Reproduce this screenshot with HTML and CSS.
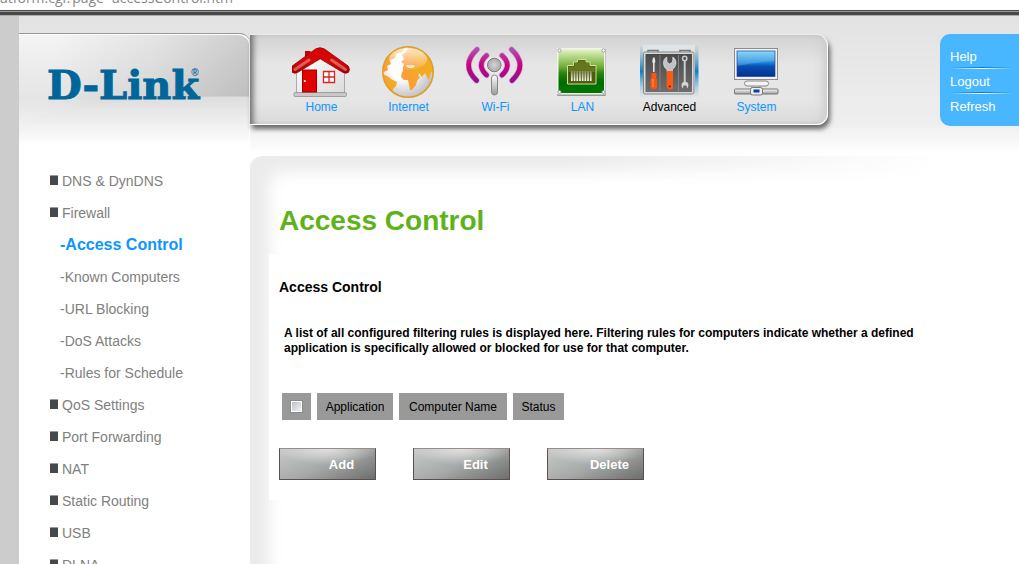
FILE: index.html
```html
<!DOCTYPE html>
<html lang="en">
<head>
    <meta charset="UTF-8">
    <meta name="viewport" content="width=device-width, initial-scale=1.0">
    <title>D-Link - Access Control</title>
    <link rel="stylesheet" href="styles.css">
</head>
<body>
    <div class="address-bar"><span>atform.cgi?page=accessControl.htm</span></div>

    <div class="page">
        <header class="header">
            <div class="logo">
                <span class="logo-name">D-Link</span><span class="logo-mark">®</span>
            </div>

            <nav class="main-nav">
                <a href="#home">
                    <svg width="60" height="56" viewBox="1 0 60 56">
                        <defs>
                            <linearGradient id="roof" x1="0" y1="0" x2="0" y2="1">
                                <stop offset="0" stop-color="#e00000"/>
                                <stop offset=".55" stop-color="#d00808"/>
                                <stop offset="1" stop-color="#a80000"/>
                            </linearGradient>
                            <linearGradient id="wall" x1="0" y1="0" x2="1" y2="1">
                                <stop offset="0" stop-color="#fff"/>
                                <stop offset="1" stop-color="#dcdcdc"/>
                            </linearGradient>
                        </defs>
                        <rect x="14" y="7" width="5.5" height="11" fill="#c40000"/>
                        <path d="M5.5 24 L29 9 L53.5 24 V49 H5.5Z" fill="url(#wall)" stroke="#aaa"/>
                        <rect x="3" y="48.5" width="52.5" height="4" rx="1" fill="#c8c8c8" stroke="#929292" stroke-width=".8"/>
                        <rect x="11.5" y="26" width="14" height="22" fill="#e30000" stroke="#a00000"/>
                        <circle cx="13.8" cy="37" r="1.1" fill="#fff"/>
                        <path d="M32.5 27.5H43.5V38.5H32.5Z M38 27.5V38.5 M32.5 33H43.5" fill="#fff" stroke="#d22" stroke-width="1.3"/>
                        <path d="M1.2 22 L24.5 5 Q29 2.4 33.5 5 L57.2 22 Q59.5 25.500 57.500 28.3 Q55 30 52 28.5 L29.2 14.8 L6.500 28.500 Q3.5 30 1.200 28.300 Q-.8 25.500 1.2 22Z" fill="url(#roof)" stroke="#940000" stroke-width=".8"/>
                        <path d="M4 25.5 L18 16 M54.500 25.5 L40.500 16" stroke="#f5a0a0" stroke-width="3" stroke-linecap="round" opacity=".55"/>
                    </svg>
                    <span>Home</span>
                </a>
                <a href="#internet">
                    <svg width="60" height="56" viewBox="0 0 60 56">
                        <defs>
                            <linearGradient id="land" x1="0" y1="0" x2="1" y2="0">
                                <stop offset="0" stop-color="#ff9a3c"/>
                                <stop offset="1" stop-color="#f0b01c"/>
                            </linearGradient>
                            <linearGradient id="gloss" x1="0" y1="0" x2="0" y2="1">
                                <stop offset="0" stop-color="#fff" stop-opacity=".75"/>
                                <stop offset="1" stop-color="#fff" stop-opacity=".05"/>
                            </linearGradient>
                            <radialGradient id="sea" cx=".4" cy=".4" r=".65">
                                <stop offset=".4" stop-color="#fdfdfd"/>
                                <stop offset="1" stop-color="#bdbdc4"/>
                            </radialGradient>
                            <clipPath id="globe"><circle cx="29" cy="28" r="25"/></clipPath>
                        </defs>
                        <circle cx="29" cy="28" r="25" fill="url(#sea)"/>
                        <g clip-path="url(#globe)" fill="url(#land)">
                            <path d="M0 0H26L24 7 17 10 16 14 11 16 12 20 8 22 9 26 5 28 0 24Z"/>
                            <path d="M4 30 L10 33 12 35 18 38 17 42 14 45 13 49 15 54 4 50 0 36Z"/>
                            <path d="M30 2 L27 8 23 11 25 15 22 18 25 20 24 24 28 23 31 21 34 23 38 22 40 25 27 26 23 28 22 33 25 36 29 36 30 41 31 46 33 46 37 41 38 37 41 33 38 30 40 29 43 33 46 29 48 33 50 36 52 28 56 29 56 0Z"/>
                            <path d="M24 22 H40 V31 H24Z"/>
                            <path d="M46 49 L52 41 54 45 48 52Z"/>
                        </g>
                        <path d="M27 22 L29 21 31 23 33 21 36 22 34 24 30 24Z" fill="#fff4dc"/>
                        <ellipse cx="29" cy="15" rx="19" ry="11" fill="url(#gloss)"/>
                        <circle cx="29" cy="28" r="25.2" fill="none" stroke="#df9e25" stroke-width="1.6"/>
                    </svg>
                    <span>Internet</span>
                </a>
                <a href="#wifi">
                    <svg width="60" height="56" viewBox="1 0 60 56">
                        <defs>
                            <linearGradient id="wave" x1="0" y1="0" x2="0" y2="1">
                                <stop offset="0" stop-color="#b04cb0"/>
                                <stop offset=".5" stop-color="#c9047e"/>
                                <stop offset="1" stop-color="#95108f"/>
                            </linearGradient>
                            <radialGradient id="ball">
                                <stop offset="0" stop-color="#d4d4d4"/>
                                <stop offset="1" stop-color="#aaa"/>
                            </radialGradient>
                            <linearGradient id="stick" x1="0" y1="0" x2="0" y2="1">
                                <stop offset="0" stop-color="#fff"/>
                                <stop offset="1" stop-color="#999"/>
                            </linearGradient>
                        </defs>
                        <g fill="none" stroke-linecap="round">
                            <path d="M12 5.5 Q-4.5 21 11.5 36.5 M46.6 5.5 Q63.1 21 47.1 36.5 M21.5 11.5 Q11 21 21.5 31 M37.1 11.5 Q47.6 21 37.1 31" stroke="#d9b4d9" stroke-width="6.4"/>
                            <path d="M12 5.5 Q-4.5 21 11.5 36.5 M46.6 5.5 Q63.1 21 47.1 36.5 M21.5 11.5 Q11 21 21.5 31 M37.1 11.5 Q47.6 21 37.1 31" stroke="url(#wave)" stroke-width="4.8"/>
                        </g>
                        <circle cx="29.3" cy="21" r="8" fill="#f4f4f4"/>
                        <circle cx="29.3" cy="21" r="6.8" fill="url(#ball)" stroke="#777"/>
                        <rect x="26.5" y="31" width="6" height="20" rx="3" fill="url(#stick)" stroke="#888"/>
                    </svg>
                    <span>Wi-Fi</span>
                </a>
                <a href="#lan">
                    <svg width="60" height="56" viewBox="1 0 60 56">
                        <defs>
                            <linearGradient id="plate" x1="0" y1="0" x2="0" y2="1">
                                <stop offset="0" stop-color="#e4f2c4"/>
                                <stop offset=".4" stop-color="#6fae34"/>
                                <stop offset=".55" stop-color="#2a8210"/>
                                <stop offset=".75" stop-color="#006c00"/>
                                <stop offset="1" stop-color="#007800"/>
                            </linearGradient>
                            <linearGradient id="pins" x1="0" y1="0" x2="0" y2="1">
                                <stop offset="0" stop-color="#8a8a60"/>
                                <stop offset="1" stop-color="#fff"/>
                            </linearGradient>
                        </defs>
                        <rect x="5" y="4.5" width="49" height="47.5" rx="1.5" fill="#999"/>
                        <rect x="5" y="4" width="48.5" height="46.5" rx="1.5" fill="#f0f4e8"/>
                        <rect x="6.5" y="5.5" width="45.5" height="43.5" fill="url(#plate)"/>
                        <path d="M15.5 40V21.5H21.5V18H25.5V15.5H34V18H38V21.5H44V40Z" fill="#4f5d08" stroke="#cfe0a0"/>
                        <path d="M16.5 28V22.5H22.5V19H26.5V16.5H33V19H37V22.5H43V28Z" fill="#66761a"/>
                        <path fill="url(#pins)" d="M19 27h1.7v10h-1.7Z M21.7 27h1.7v10h-1.7Z M24.4 27h1.7v10h-1.7Z M27.1 27h1.7v10h-1.7Z M29.8 27h1.7v10h-1.7Z M32.5 27h1.7v10h-1.7Z M35.2 27h1.7v10h-1.7Z M37.9 27h1.7v10h-1.7Z"/>
                        <g fill="#fff" stroke="#889" stroke-width=".8">
                            <circle cx="7.5" cy="6.5" r="1.6"/><circle cx="51.5" cy="6.5" r="1.6"/>
                            <circle cx="7.5" cy="48" r="1.6"/><circle cx="51.5" cy="48" r="1.6"/>
                        </g>
                    </svg>
                    <span>LAN</span>
                </a>
                <a href="#advanced" class="current">
                    <svg width="60" height="56" viewBox="1 0 60 56">
                        <defs>
                            <linearGradient id="glow" x1="0" y1="0" x2="0" y2="1">
                                <stop offset="0" stop-color="#2b8fc8" stop-opacity="0"/>
                                <stop offset=".5" stop-color="#0d7fc0"/>
                                <stop offset="1" stop-color="#7cc4ec" stop-opacity="0"/>
                            </linearGradient>
                            <linearGradient id="case" x1="0" y1="0" x2="0" y2="1">
                                <stop offset="0" stop-color="#4a4a4a"/>
                                <stop offset="1" stop-color="#6e6e6e"/>
                            </linearGradient>
                        </defs>
                        <rect x="1" y="1" width="58.5" height="53" fill="url(#glow)"/>
                        <rect x="4" y="1" width="52" height="52" fill="#dfe4e8"/>
                        <path d="M9 8V6.5H19V8M41 8V6.5H51V8" fill="none" stroke="#777" stroke-width="1.6"/>
                        <rect x="4.5" y="8" width="50.5" height="42" rx="1.5" fill="#d8d8d8" stroke="#858585"/>
                        <rect x="6.5" y="10" width="46.5" height="38" fill="url(#case)"/>
                        <path d="M21 11V47M39.5 11V47" stroke="#888" stroke-width=".9"/>
                        <path d="M14 13.5h1.6l.8 4-.8 2V28H14V19.5l-.8-2Z" fill="#e4e4e4"/>
                        <path d="M12 29.5Q14.8 28 17.8 29.5L17 33 18 36V43Q18 45 16 45H13.7Q11.5 45 11.5 43V36L12.7 33Z" fill="#ff5310"/>
                        <path d="M14 35V43" stroke="#ffa27a"/>
                        <path d="M27.8 13 L28 18 30.7 20 33.5 18 33.8 13 Q37.5 15 37 20 Q36 24 33.5 25.5V28H28V25.5Q25 24 24.5 20 Q24 15 27.8 13Z" fill="#bfc4c8" stroke="#e5e5e5" stroke-width=".6"/>
                        <path d="M27.7 27H34V43.5Q34 45.5 31 45.5T27.7 43.5Z" fill="#ff5a14"/>
                        <circle cx="30.8" cy="42.5" r="1.1" fill="#5a2010"/>
                        <circle cx="45.7" cy="14.5" r="2.2" fill="none" stroke="#ccc" stroke-width="1.5"/>
                        <path d="M45.7 17V38" stroke="#ccc" stroke-width="2"/>
                        <path d="M43.500 44.5Q41.500 40.500 43.500 38.500Q46 37 48.500 38.500Q50.300 41 48.500 44.500L47.300 41.500H44.600Z" fill="#d6d6d6"/>
                    </svg>
                    <span>Advanced</span>
                </a>
                <a href="#system">
                    <svg width="60" height="56" viewBox="1 0 60 56">
                        <defs>
                            <linearGradient id="screen" x1="0" y1="0" x2="0" y2="1">
                                <stop offset="0" stop-color="#6fd0f8"/>
                                <stop offset=".45" stop-color="#1c88dc"/>
                                <stop offset=".6" stop-color="#0850b0"/>
                                <stop offset="1" stop-color="#042f92"/>
                            </linearGradient>
                            <linearGradient id="metal" x1="0" y1="0" x2="0" y2="1">
                                <stop offset="0" stop-color="#fff"/>
                                <stop offset="1" stop-color="#999"/>
                            </linearGradient>
                        </defs>
                        <rect x="8.5" y="4.5" width="43" height="31" fill="#f1f1f1" stroke="#8c8c8c"/>
                        <rect x="11" y="7" width="38" height="25.5" fill="url(#screen)" stroke="#20429a" stroke-width=".7"/>
                        <path d="M11.5 7.5H48.5V17Q30 18 11.5 22Z" fill="#fff" opacity=".18"/>
                        <path d="M26 41H34V46H26Z" fill="#ddd" stroke="#888" stroke-width=".8"/>
                        <rect x="18.5" y="37" width="24" height="5" rx="2.5" fill="#f4f4f4" stroke="#888"/>
                        <rect x="8.5" y="45" width="43.5" height="5" rx="1" fill="url(#metal)" stroke="#777"/>
                        <rect x="24.5" y="43.5" width="12" height="7.5" rx="2" fill="#eee" stroke="#777"/>
                        <rect x="27.5" y="45.5" width="6" height="3" fill="#0b3eb4"/>
                    </svg>
                    <span>System</span>
                </a>
            </nav>

            <ul class="tools">
                <li><a href="#help">Help</a></li>
                <li><a href="#logout">Logout</a></li>
                <li><a href="#refresh">Refresh</a></li>
            </ul>
        </header>

        <div class="columns">
            <ul class="side-menu">
                <li><a href="#dns">DNS &amp; DynDNS</a></li>
                <li><a href="#firewall">Firewall</a></li>
                <li class="sub active"><a href="#access">-Access Control</a></li>
                <li class="sub"><a href="#known">-Known Computers</a></li>
                <li class="sub"><a href="#url">-URL Blocking</a></li>
                <li class="sub"><a href="#dos">-DoS Attacks</a></li>
                <li class="sub"><a href="#rules">-Rules for Schedule</a></li>
                <li><a href="#qos">QoS Settings</a></li>
                <li><a href="#port">Port Forwarding</a></li>
                <li><a href="#nat">NAT</a></li>
                <li><a href="#routing">Static Routing</a></li>
                <li><a href="#usb">USB</a></li>
                <li><a href="#dlna">DLNA</a></li>
            </ul>

            <main class="content">
                <div class="content-head">
                    <h1>Access Control</h1>
                </div>
                <div class="content-body">
                    <h2>Access Control</h2>
                    <p>A list of all configured filtering rules is displayed here. Filtering rules for computers indicate whether a defined application is specifically allowed or blocked for use for that computer.</p>
                    <table class="rules">
                        <thead>
                            <tr>
                                <th><input type="checkbox" aria-label="Select all"></th>
                                <th class="col-app">Application</th>
                                <th class="col-name">Computer Name</th>
                                <th class="col-status">Status</th>
                            </tr>
                        </thead>
                    </table>
                    <div class="buttons">
                        <button type="button">Add</button>
                        <button type="button">Edit</button>
                        <button type="button">Delete</button>
                    </div>
                </div>
            </main>
        </div>
    </div>
</body>
</html>
```
FILE: styles.css
```css
* {
    box-sizing: border-box;
}
body {
    margin: 0;
    height: 100vh;
    overflow: hidden;
    display: flex;
    flex-direction: column;
    font-family: "Liberation Sans", Arial, sans-serif;
    font-size: 12px;
    background: #fff;
}
a {
    color: inherit;
    text-decoration: none;
}
ul {
    list-style: none;
    margin: 0;
    padding: 0;
}

/* browser strip on top */
.address-bar {
    flex: none;
    display: flex;
    align-items: flex-end;
    height: 16px;
    overflow: hidden;
    padding-bottom: 6px;
    background: linear-gradient(#fff 10px, #4a4a4a 10px, #4a4a4a 11px, #999 11px, #999 12px, #484848 12px, #484848 15px, #aaa 15px);
    color: #888;
    font-family: "Open Sans", sans-serif;
    font-size: 14px;
    line-height: 24px;
}

.page {
    flex: 1;
    min-height: 0;
    border-left: 19px solid #ccc;
    background: linear-gradient(#e2e2e2, #efefef 108px, #fff 138px);
}

/* header */
.header {
    display: flex;
    align-items: flex-start;
    height: 140px;
    padding-top: 17px;
}
.logo {
    flex: none;
    display: flex;
    align-items: flex-start;
    width: 231px;
    height: 123px;
    padding: 27px 0 0 28px;
    border-top: 1px solid #999;
    border-top-right-radius: 10px;
    background:
        linear-gradient(rgba(255, 255, 255, 0) 64px, #fff 112px),
        radial-gradient(ellipse 240px 50px at 210px 112px, #dedede 98%, rgba(222, 222, 222, 0)),
        linear-gradient(rgba(0, 0, 0, 0), rgba(0, 0, 0, .08) 80px),
        linear-gradient(100deg, #f4f4f4 15%, #e4e4e4 55%, #c8c8c8);
    box-shadow: inset -2px 2px 0 -1px #fff;
    color: #006699;
}
.logo-name {
    font-family: "DejaVu Serif", serif;
    font-weight: bold;
    font-size: 40px;
    line-height: 48px;
    -webkit-text-stroke: 1px #006699;
}
.logo-mark {
    margin-left: -8px;
    font-size: 10px;
    line-height: 24px;
    font-weight: bold;
}
.main-nav {
    flex: none;
    display: flex;
    width: 578px;
    height: 90px;
    margin-top: 2px;
    padding: 9px 0 0 28px;
    border: solid #fff;
    border-width: 0 1px 1px 0;
    border-radius: 0 11px 11px 0;
    background: linear-gradient(#d2d2d2, #e6e6e6 30px, #e6e6e6 65px, #d9d9d9);
    box-shadow:
        inset 7px 0 6px -4px #666,
        inset -10px 0 8px -6px #ccc,
        0 -1px 0 #eee,
        2px 4px 5px #666;
    color: #0c96ff;
}
.main-nav a {
    width: 87px;
    display: flex;
    flex-direction: column;
    align-items: center;
    line-height: 15px;
}
.main-nav .current {
    color: #000;
}
.tools {
    width: 79px;
    height: 92px;
    margin: 1px 0 0 auto;
    padding: 10px 6px 0 10px;
    border-radius: 10px 0 0 10px;
    background: #49b7ff;
    color: #fff;
    font-size: 13px;
}
.tools li {
    line-height: 25px;
    background:
        linear-gradient(90deg, #49b7ff, #0878cc 50%, #49b7ff) left bottom 1px / 100% 1px no-repeat,
        linear-gradient(90deg, #49b7ff, #fff 50%, #49b7ff) left bottom / 100% 1px no-repeat;
}
.tools li:last-child {
    background: none;
}

/* columns below the header */
.columns {
    display: flex;
}
.side-menu {
    flex: none;
    width: 231px;
    padding: 9px 0 0 31px;
    color: #808080;
    font-size: 14px;
    line-height: 32px;
}
.side-menu li {
    display: flex;
    height: 32px;
}
.side-menu li::before {
    content: "";
    width: 8px;
    height: 9px;
    margin: 10px 4px 0 0;
    border-top: 1px solid #999;
    background: #484848;
}
.side-menu .sub {
    padding-left: 10px;
}
.side-menu .sub::before {
    display: none;
}
.side-menu .active {
    color: #0c96ff;
    font-size: 16px;
    font-weight: bold;
}

.content {
    flex: 1;
    min-height: 420px;
    border-top-left-radius: 12px;
    background: #fff;
    box-shadow: inset 22px 18px 16px -3px #ebebeb;
}
.content-head {
    padding: 49px 29px 17px;
    background: linear-gradient(90deg, rgba(255, 255, 255, 0) 40%, #fff 90%);
}
h1 {
    margin: 0;
    color: #5eb31a;
    font-size: 28px;
    line-height: 32px;
}
.content-body {
    margin-left: 19px;
    padding: 24px 10px 20px;
    background: #fff;
}
h2 {
    margin: 0;
    font-size: 14px;
    line-height: 18px;
}
.content-body p {
    max-width: 630px;
    margin: 30px 5px 0;
    font-weight: bold;
    line-height: 15px;
}
.rules {
    margin: 37px 0 0 -3px;
    border-collapse: separate;
    border-spacing: 6px 0;
}
.rules th {
    height: 27px;
    padding: 0 8px;
    background: #999;
    font-size: 12px;
    font-weight: normal;
}
.rules .col-app {
    width: 76px;
}
.rules .col-name {
    width: 108px;
}
.rules .col-status {
    width: 51px;
}
.rules input {
    appearance: none;
    display: block;
    width: 13px;
    height: 13px;
    margin: 0;
    border: 1px solid #8a8a8a;
    outline: 1px solid #fff;
    outline-offset: -2px;
    background: linear-gradient(135deg, #b4bac4, #f8f8f8);
}
.buttons {
    display: flex;
    gap: 37px;
    margin-top: 28px;
}
.buttons button {
    width: 97px;
    height: 32px;
    padding: 0 0 0 28px;
    border: 1px solid #5c4f4c;
    border-top-color: #9a8c88;
    background:
        radial-gradient(ellipse 50px 16px at 50% 0, rgba(255, 255, 255, .6), rgba(255, 255, 255, 0)),
        linear-gradient(155deg, #c8cac9, #a6a9a7 50%, #6b6e6c);
    color: #fff;
    font-family: inherit;
    font-size: 13px;
    font-weight: bold;
}
```
